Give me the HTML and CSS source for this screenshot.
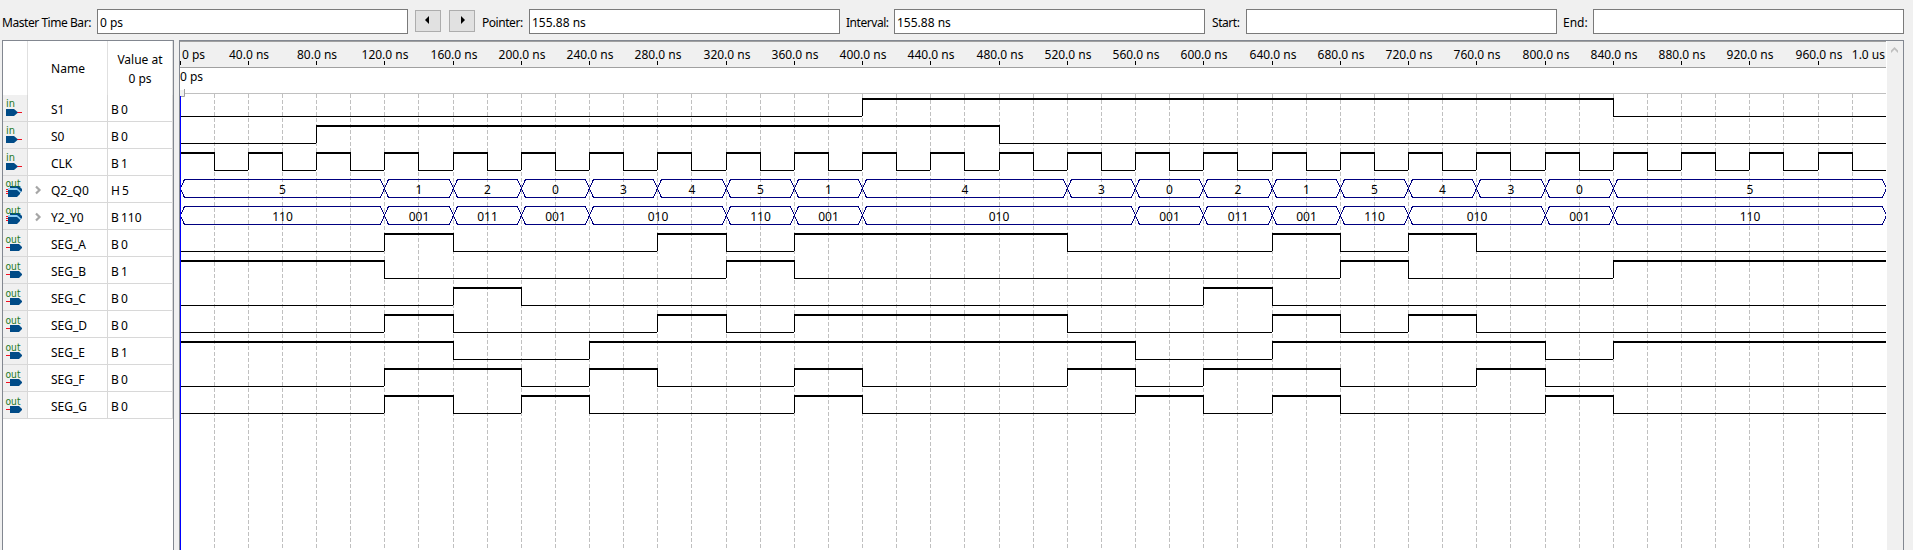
FILE: index.html
```html
<!DOCTYPE html>
<html lang="en">
<head>
<meta charset="utf-8">
<title>Simulation Waveform Editor</title>
<link rel="stylesheet" href="styles.css">
</head>
<body>
<header class="toolbar">
  <label class="lbl lbl-master"><span>Master Time Bar:</span></label><div class="field">0 ps</div>
  <button class="step" aria-label="Previous"><svg width="5" height="8" viewBox="0 0 5 8"><path d="M4 0v8L0 4z"/></svg></button>
  <button class="step step-next" aria-label="Next"><svg width="5" height="8" viewBox="0 0 5 8"><path d="M0 0v8l4-4z"/></svg></button>
  <label class="lbl lbl-pointer"><span>Pointer:</span></label><div class="field">155.88 ns</div>
  <label class="lbl lbl-interval"><span>Interval:</span></label><div class="field">155.88 ns</div>
  <label class="lbl lbl-start"><span>Start:</span></label><div class="field"></div>
  <label class="lbl lbl-end"><span>End:</span></label><div class="field"></div>
</header>
<main class="panes">
  <section class="signals">
    <div class="head"><div></div><div class="head-name">Name</div><div class="head-value">Value at<br>0 ps</div></div>
    <div id="rows"></div>
  </section>
  <section class="waves">
    <svg id="wave" width="1707" height="509" viewBox="180 41 1707 509"></svg>
    <div class="scrollbar"><svg width="7" height="6" viewBox="0 0 7 6"><path d="M0 3.5L3.5 0 7 3.5V6L3.5 2.500 0 6z"/></svg></div>
  </section>
</main>
<script src="app.js"></script>
</body>
</html>
```
FILE: styles.css
```css
* { box-sizing: border-box; }
body {
  margin: 0;
  height: 550px;
  overflow: hidden;
  background: #f0f0f0;
  color: #000;
  font: 12px/16px "Noto Sans", "Open Sans", sans-serif;
}
.toolbar { display: flex; height: 40px; padding-top: 9px; align-items: flex-start; }
.lbl { flex: none; height: 25px; padding-top: 6px; white-space: nowrap; letter-spacing: -0.45px; }
.lbl-master { width: 97px; padding-left: 2px; }
.lbl-pointer { width: 54px; padding-left: 7px; }
.lbl-interval { width: 54px; padding-left: 6px; }
.lbl-start { width: 41px; padding-left: 7px; }
.lbl-end { width: 36px; padding-left: 6px; letter-spacing: 0; }
.field { flex: none; width: 311px; height: 25px; border: 1px solid #7a7a7a; background: #fff; padding: 5px 0 0 2px; }
.step {
  flex: none; width: 26px; height: 22px; margin: 1px 0 0 7px; padding: 0 2px 2px 0;
  display: flex; align-items: center; justify-content: center;
  background: #e1e1e1; border: 1px solid #adadad;
}
.step-next { margin-left: 8px; padding: 0 0 2px 2px; }
.panes { display: flex; height: 510px; padding-left: 2px; }
.signals { flex: none; width: 172px; margin-right: 5px; border: 1px solid #828790; border-bottom: 0; background: #fff; }
.head, .row { display: grid; grid-template-columns: 25px 80px 65px; }
.head { height: 54px; text-align: center; }
.head > div, .row > div { border-right: 1px solid #e0e0e0; }
.head-name { padding: 20px 0 0 1px; }
.head-value { padding-top: 9px; line-height: 19px; }
.row { height: 27px; }
.row > div { border-color: #d8d8d8; border-bottom: 1px solid #d8d8d8; white-space: nowrap; }
.row > .kind { background: #f0f0f0; border-bottom-color: #d8d8d8; }
.kind svg { display: block; }
.name { display: flex; padding: 7px 0 0 7px; }
.name svg { flex: none; width: 16px; height: 10px; margin-top: 2px; }
.value { padding: 7px 0 0 3px; word-spacing: -1px; }
.waves { flex: none; display: flex; width: 1725px; border: 1px solid #828790; border-bottom: 0; background: #fff; }
.waves > svg { display: block; flex: none; }
.scrollbar { flex: none; width: 16px; background: #f0f0f0; padding: 6px 0 0 4px; }
.scrollbar svg { display: block; fill: #bfbfbf; }
.glyph-text { font: 10px "DejaVu Sans", sans-serif; fill: #1e781e; }
#wave text { font-size: 12px; }
.mid { text-anchor: middle; }
```
FILE: app.js
```js
const ORIGIN = 180, STEP = 34.125, END = 1886, TOP = 95, ROW = 27;
const xAt = ns => Math.floor(ORIGIN + STEP * ns / 20);

// Bit signals list the times at which they toggle; bus signals list [start, value].
const signals = [
  { name: 'S1', kind: 'in', value: 'B 0', init: 0, toggles: [400, 840] },
  { name: 'S0', kind: 'in', value: 'B 0', init: 0, toggles: [80, 480] },
  { name: 'CLK', kind: 'in', value: 'B 1', init: 1, toggles: Array.from({ length: 49 }, (_, i) => (i + 1) * 20) },
  { name: 'Q2_Q0', kind: 'bus', value: 'H 5', bus: [[0, '5'], [120, '1'], [160, '2'], [200, '0'], [240, '3'], [280, '4'], [320, '5'], [360, '1'], [400, '4'], [520, '3'], [560, '0'], [600, '2'], [640, '1'], [680, '5'], [720, '4'], [760, '3'], [800, '0'], [840, '5']] },
  { name: 'Y2_Y0', kind: 'bus', value: 'B 110', bus: [[0, '110'], [120, '001'], [160, '011'], [200, '001'], [240, '010'], [320, '110'], [360, '001'], [400, '010'], [560, '001'], [600, '011'], [640, '001'], [680, '110'], [720, '010'], [800, '001'], [840, '110']] },
  { name: 'SEG_A', kind: 'out', value: 'B 0', init: 0, toggles: [120, 160, 280, 320, 360, 520, 640, 680, 720, 760] },
  { name: 'SEG_B', kind: 'out', value: 'B 1', init: 1, toggles: [120, 320, 360, 680, 720, 840] },
  { name: 'SEG_C', kind: 'out', value: 'B 0', init: 0, toggles: [160, 200, 600, 640] },
  { name: 'SEG_D', kind: 'out', value: 'B 0', init: 0, toggles: [120, 160, 280, 320, 360, 520, 640, 680, 720, 760] },
  { name: 'SEG_E', kind: 'out', value: 'B 1', init: 1, toggles: [160, 240, 560, 640, 800, 840] },
  { name: 'SEG_F', kind: 'out', value: 'B 0', init: 0, toggles: [120, 200, 240, 280, 360, 400, 520, 560, 600, 680, 760, 800] },
  { name: 'SEG_G', kind: 'out', value: 'B 0', init: 0, toggles: [120, 160, 200, 240, 360, 400, 560, 600, 640, 680, 800, 840] }
];

const icons = {
  in: '<text x="3" y="12" textLength="9" lengthAdjust="spacingAndGlyphs" class="glyph-text">in</text><path d="M14 17h5v1h-5z" fill="#f01020"/><path d="M3 14h8l3.500 3v1l-3.500 3H3z" fill="#004b87"/>',
  out: '<text x="2.500" y="12.500" textLength="15" lengthAdjust="spacingAndGlyphs" class="glyph-text">out</text><path d="M3 17h5v1H3z" fill="#f01020"/><path d="M7 14h9l3 3v1l-3 3H7z" fill="#004b87"/>',
  bus: '<path d="M3 13h4v1H3zM3 15h4v1H3zM3 17h4v1H3z" fill="#f01020"/><path d="M7 10h9l3 3v2l-3 3H7z" fill="#004b87"/><path d="M5 12h9l4 3.500-1 1.500-3.500-3H5z" fill="#8fd0f5"/><path d="M5 14h9l3 3v1l-3 3H5z" fill="#004b87"/><text x="2.500" y="11" textLength="15" lengthAdjust="spacingAndGlyphs" class="glyph-text">out</text>'
};
const arrow = '<svg viewBox="0 0 16 10"><path d="M1 1.500L4.500 5 1 8.500" fill="none" stroke="#a6a6a6" stroke-width="2.200"/></svg>';
document.getElementById('rows').innerHTML = signals.map(s =>
  `<div class="row"><div class="kind"><svg width="24" height="26">${icons[s.kind]}</svg></div>` +
  `<div class="name">${s.bus ? arrow : '<svg></svg>'}<span>${s.name}</span></div><div class="value">${s.value}</div></div>`).join('');

const box = (x, y, w, h, fill) => `<rect x="${x}" y="${y}" width="${w}" height="${h}" fill="${fill}" shape-rendering="crispEdges"/>`;
let out = box(180, 41, 1706, 26, '#f0f0f0') + box(180, 41, 1706, 1, '#a0a0a0') + box(180, 67, 1706, 1, '#a0a0a0') + box(185, 93, 1701, 1, '#c0c0c0');
out += box(180, 61, 1, 4, '#000') + '<text x="182" y="59">0 ps</text><text x="180" y="81">0 ps</text>';
for (let ns = 20; ns < 1000; ns += 20) {
  const x = xAt(ns);
  if (ns % 40 === 0) out += box(x, 61, 1, 4, '#000') + `<text class="mid" x="${x + 1}" y="59">${ns}.0 ns</text>`;
  out += `<path d="M${x + .5} 94V550" stroke="#c0c0c0" stroke-dasharray="4 2" shape-rendering="crispEdges"/>`;
}
out += '<text x="1885" y="59" text-anchor="end">1.0 us</text>';

signals.forEach((s, i) => {
  const y = TOP + i * ROW;
  if (s.bus) {
    s.bus.forEach(([t, v], k) => {
      const a = xAt(t) + .5, b = k + 1 < s.bus.length ? xAt(s.bus[k + 1][0]) + .5 : END + .5;
      out += `<path d="M${a} ${y + 12.5}L${a + 4} ${y + 3.5}H${b - 4}L${b} ${y + 12.5}L${b - 4} ${y + 21.5}H${a + 4}Z" fill="none" stroke="#000080" shape-rendering="crispEdges"/>` +
        `<text class="mid" x="${(a + b) / 2}" y="${y + 18}">${v}</text>`;
    });
    return;
  }
  let level = s.init, from = ORIGIN;
  [...s.toggles.map(xAt), END].forEach(to => {
    out += level ? box(from, y + 3, to - from + (to < END ? 1 : 0), 2, '#000') : box(from, y + 21, to - from, 1, '#000');
    if (to < END) out += box(to, y + 3, 1, level ? 19 : 18, '#000');
    from = to;
    level = 1 - level;
  });
});
out += box(1886, 41, 1, 509, '#fff');
out += box(180, 95, 1, 455, '#0000ff') + '<path d="M180 90h4v6h-4z" fill="#f0f0f0"/><path d="M184.500 89v7.500H181" fill="none" stroke="#a0a0a0"/>';
document.getElementById('wave').innerHTML = out;
```
